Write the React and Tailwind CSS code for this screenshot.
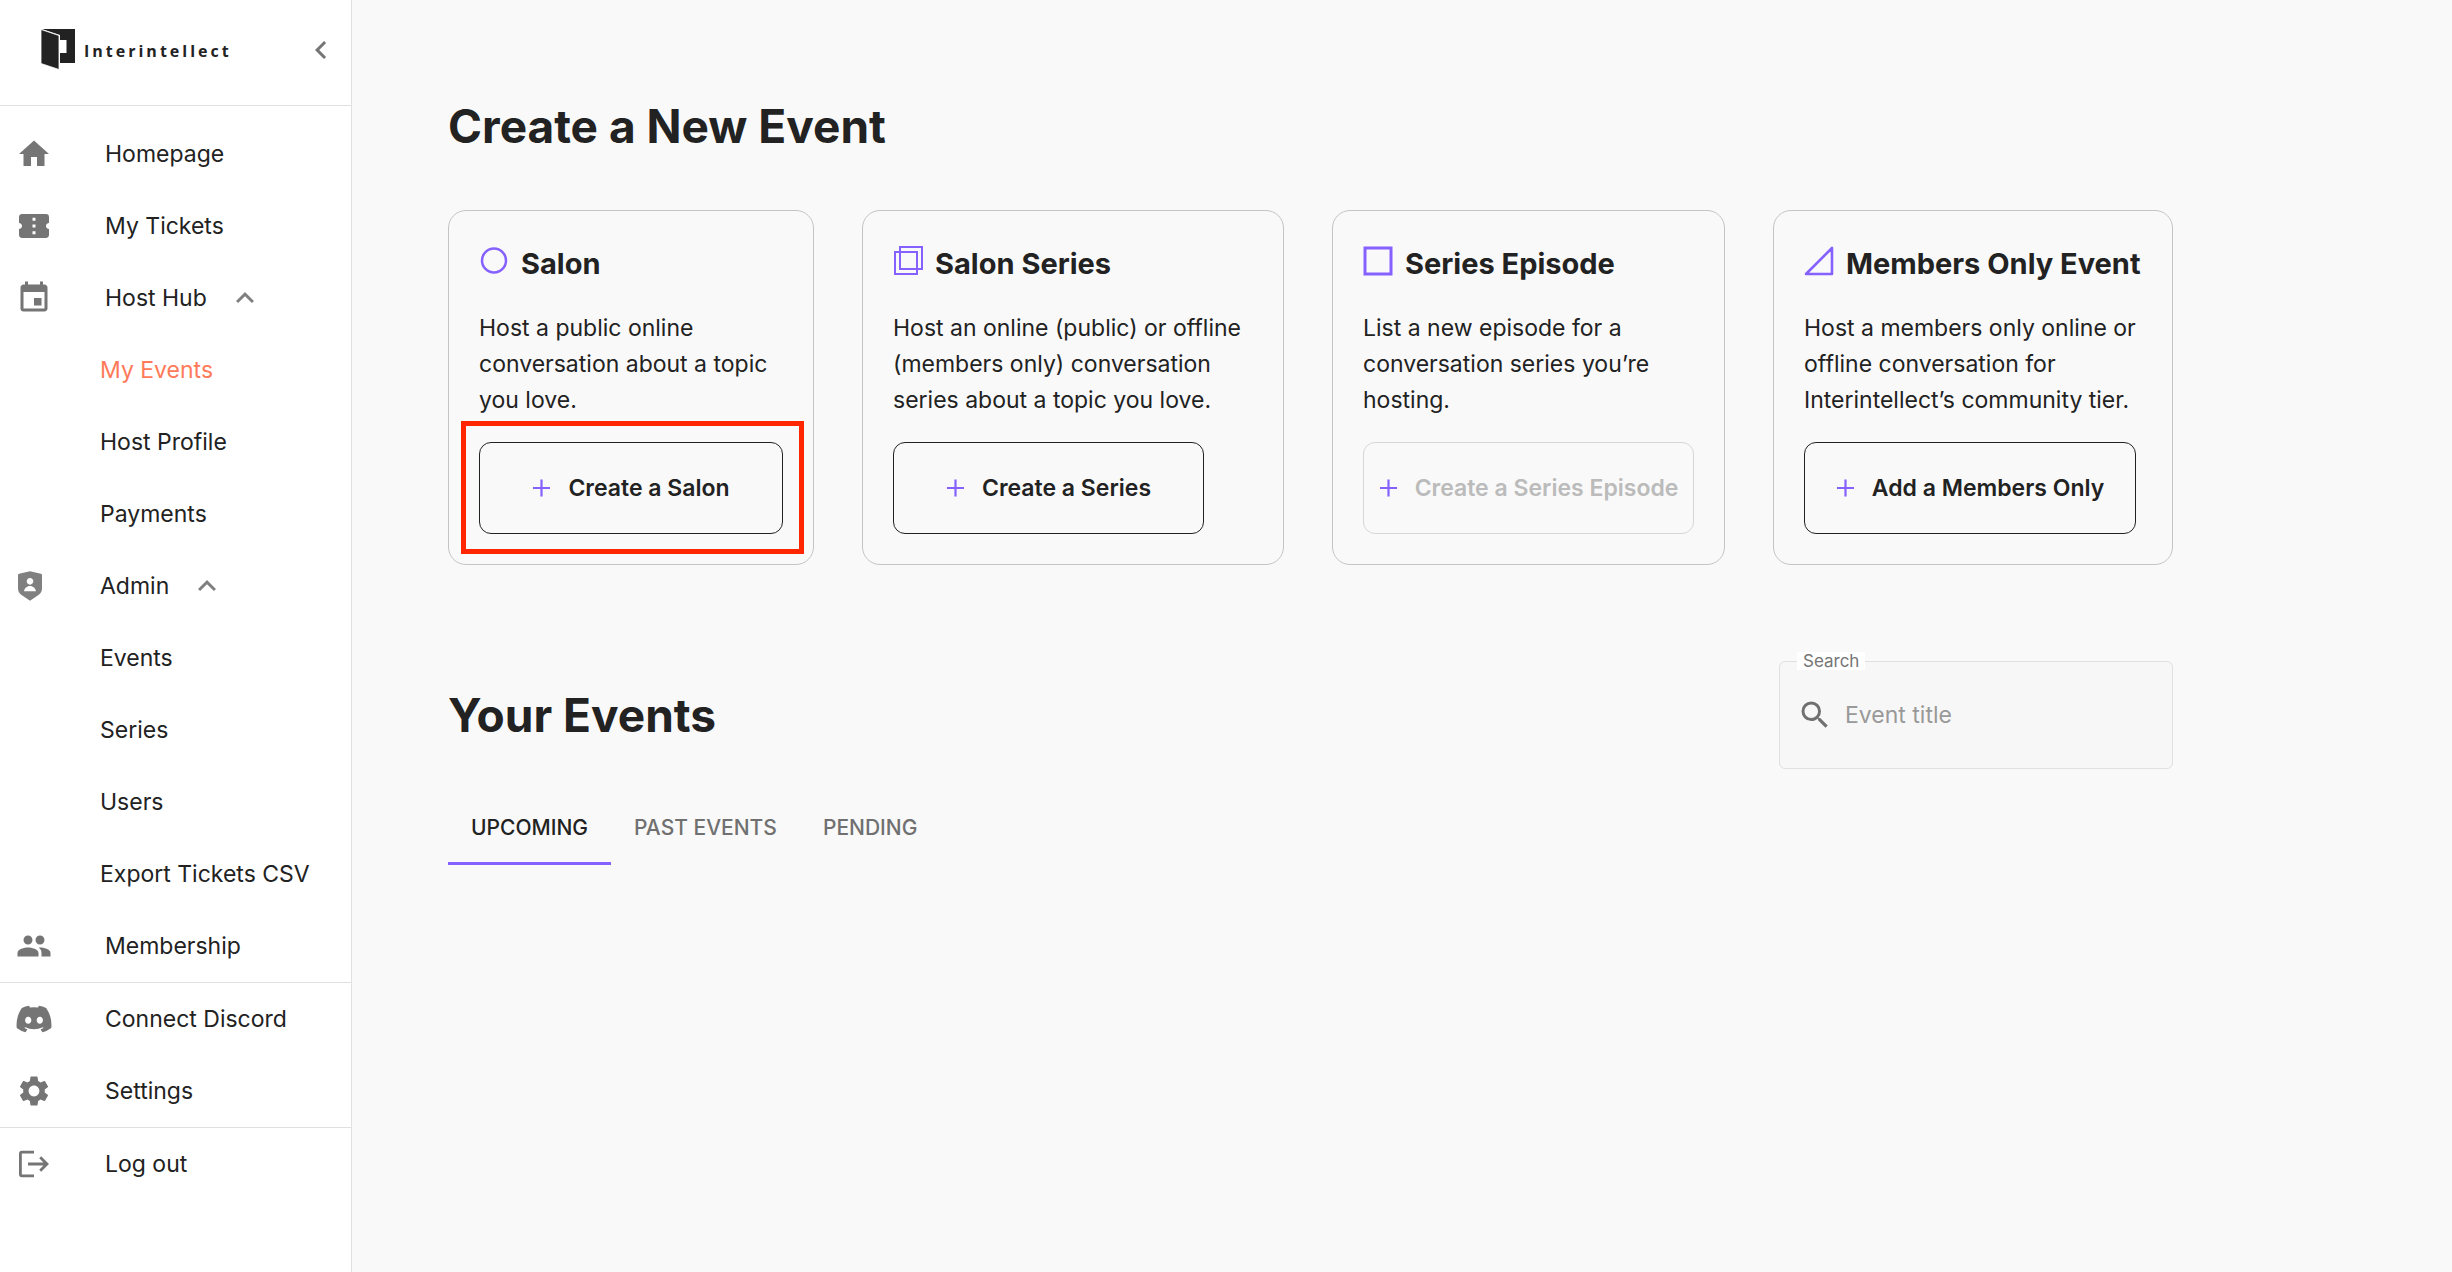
import React, { useState } from 'react';
import clsx from 'clsx';
import {
    MdConfirmationNumber,
    MdEvent,
    MdHome,
    MdKeyboardArrowLeft,
    MdKeyboardArrowUp,
    MdPeople,
    MdSearch,
    MdSettings
} from 'react-icons/md';
import { FaDiscord } from 'react-icons/fa';
import { RiShieldUserFill } from 'react-icons/ri';

const HOST_LINKS = ['My Events', 'Host Profile', 'Payments'];
const ADMIN_LINKS = ['Events', 'Series', 'Users', 'Export Tickets CSV'];
const TABS = ['Upcoming', 'Past Events', 'Pending'];

const LogoMark = () => (
    <svg className="h-[42px] w-9" viewBox="0 0 36 42" fill="none" aria-hidden="true">
        <path d="M2 1h33v34H20V25h6.5V12H20V7L2 1z" fill="#222" />
        <path d="M1 1.5l18 6v34L1 35.5v-34z" fill="#222" stroke="#fff" strokeWidth="0.8" />
    </svg>
);

const LogoutIcon = () => (
    <svg className="size-9" viewBox="0 0 36 36" fill="none" stroke="currentColor" strokeWidth="2.8" aria-hidden="true">
        <path d="M18 6.2H5.9a1.5 1.5 0 0 0-1.5 1.5v20.6a1.5 1.5 0 0 0 1.5 1.5H18" />
        <path d="M12 18h19M24.2 11.2l6.8 6.8-6.8 6.8" />
    </svg>
);

const PlusIcon = () => (
    <svg className="size-6 shrink-0" viewBox="0 0 24 24" stroke="#8561ff" strokeWidth="2.2" aria-hidden="true">
        <path d="M5 12h17M13.5 3.5v17" />
    </svg>
);

// Outline shapes used to tell the event types apart
const SHAPES = {
    circle: <circle cx="15" cy="14.5" r="12" strokeWidth="2.5" />,
    squares: (
        <>
            <path d="M2 6h22v22H2z" strokeWidth="2" />
            <path d="M7 1h22v22H7z" strokeWidth="2" />
        </>
    ),
    square: <path d="M2 2h26v26H2z" strokeWidth="3" />,
    triangle: <path d="M2 28L28 2v26H2z" strokeWidth="2.6" strokeLinejoin="round" />
};

const EVENT_TYPES = [
    {
        id: 'salon',
        title: 'Salon',
        shape: 'circle',
        description: 'Host a public online conversation about a topic you love.',
        action: 'Create a Salon',
        buttonClass: 'w-full',
        highlighted: true
    },
    {
        id: 'series',
        title: 'Salon Series',
        shape: 'squares',
        description: 'Host an online (public) or offline (members only) conversation series about a topic you love.',
        action: 'Create a Series',
        buttonClass: 'w-[311px]'
    },
    {
        id: 'episode',
        title: 'Series Episode',
        shape: 'square',
        description: 'List a new episode for a conversation series you’re hosting.',
        action: 'Create a Series Episode',
        buttonClass: 'w-full',
        disabled: true
    },
    {
        id: 'members',
        title: 'Members Only Event',
        shape: 'triangle',
        description: 'Host a members only online or offline conversation for Interintellect’s community tier.',
        action: 'Add a Members Only',
        buttonClass: 'w-[332px]'
    }
];

const NavItem = ({ icon, label }) => (
    <a href="#" className="flex h-18 items-center px-4">
        <span className="flex w-[89px] text-[#757575]">{icon}</span>
        {label}
    </a>
);

const NavGroup = ({ icon, label, links, active, narrow }) => {
    const [open, setOpen] = useState(true);

    return (
        <div>
            <button
                type="button"
                aria-expanded={open}
                onClick={() => setOpen(!open)}
                className={clsx('flex h-18 w-full items-center', narrow ? 'px-[14px]' : 'px-4')}
            >
                <span className={clsx('flex text-[#757575]', narrow ? 'w-[86px]' : 'w-[89px]')}>{icon}</span>
                {label}
                <MdKeyboardArrowUp className="ml-5 size-9 text-[#808080]" />
            </button>
            {open && links.map((link) => (
                <a
                    key={link}
                    href="#"
                    className={clsx('flex h-18 items-center pl-[100px]', link === active && 'text-[#ff7a59]')}
                >
                    {link}
                </a>
            ))}
        </div>
    );
};

const Sidebar = () => (
    <aside className="w-[352px] shrink-0 border-r border-[#e0e0e0] bg-white">
        <div className="flex h-[106px] items-start justify-between border-b border-[#e0e0e0] pt-7 pr-3 pl-10">
            <a href="#" className="flex items-center gap-2">
                <LogoMark />
                <span className="pt-1 font-['Open_Sans',sans-serif] text-base leading-6 font-bold tracking-[3px]">
                    Interintellect
                </span>
            </a>
            <button type="button" aria-label="Collapse menu" className="mt-1 text-[#757575]">
                <MdKeyboardArrowLeft className="size-9" />
            </button>
        </div>
        <nav className="pt-3 text-[23px] leading-9">
            <NavItem icon={<MdHome className="size-9" />} label="Homepage" />
            <NavItem icon={<MdConfirmationNumber className="size-9" />} label="My Tickets" />
            <NavGroup
                icon={<MdEvent className="size-9" />}
                label="Host Hub"
                links={HOST_LINKS}
                active="My Events"
            />
            <NavGroup
                icon={<RiShieldUserFill className="size-8 text-[#808080]" />}
                label="Admin"
                links={ADMIN_LINKS}
                narrow
            />
            <NavItem icon={<MdPeople className="size-9" />} label="Membership" />
            <div className="border-y border-[#e0e0e0]">
                <NavItem icon={<FaDiscord className="-ml-px size-[38px]" />} label="Connect Discord" />
                <NavItem icon={<MdSettings className="size-9" />} label="Settings" />
            </div>
            <NavItem icon={<LogoutIcon />} label="Log out" />
        </nav>
    </aside>
);

const EventTypeCard = ({ type }) => (
    <article className="flex flex-col gap-6 rounded-[18px] border border-[#c4c4c4] p-[30px]">
        <h2 className="flex items-center gap-3 text-[29px] leading-[45px] font-bold whitespace-nowrap">
            <svg className="h-9 w-[30px] shrink-0" viewBox="0 0 30 36" fill="none" stroke="#8561ff" aria-hidden="true">
                {SHAPES[type.shape]}
            </svg>
            {type.title}
        </h2>
        <p className="text-[23px] leading-9">{type.description}</p>
        <div className="relative mt-auto">
            <button
                type="button"
                disabled={type.disabled}
                className={clsx(
                    'flex h-[92px] max-w-full items-center justify-center gap-4 rounded-xl border pr-1 text-[23px] font-semibold whitespace-nowrap',
                    type.disabled ? 'border-[#d6d6d6] text-[#bbb]' : 'border-[#222]',
                    type.buttonClass
                )}
            >
                <PlusIcon />
                {type.action}
            </button>
            {type.highlighted && (
                <div className="pointer-events-none absolute -top-[21px] -right-[21px] -bottom-5 -left-[18px] border-5 border-[#ff2600]" />
            )}
        </div>
    </article>
);

const App = () => {
    const [tab, setTab] = useState('Upcoming');
    const [keyword, setKeyword] = useState('');

    return (
        <div className="flex min-h-screen bg-[#f9f9f9] font-['Inter',sans-serif] text-[#222]">
            <Sidebar />

            <main className="min-w-0 flex-1 px-24 py-24">
                <div className="max-w-[1725px]">
                    <h1 className="mb-[54px] text-[46px] leading-[60px] font-bold">Create a New Event</h1>

                    {/* Event types */}
                    <div className="grid grid-cols-[366fr_422fr_393fr_400fr] gap-12">
                        {EVENT_TYPES.map((type) => (
                            <EventTypeCard key={type.id} type={type} />
                        ))}
                    </div>

                    {/* Your events */}
                    <div className="mt-24 flex items-center justify-between">
                        <h1 className="text-[46px] leading-[60px] font-bold">Your Events</h1>
                        <div className="relative flex h-[108px] w-[394px] items-center gap-3 rounded-md border border-[#e0e0e0] bg-[#f7f7f7] px-[17px]">
                            <label
                                htmlFor="event-search"
                                className="absolute -top-[10px] left-[17px] bg-white px-[6px] text-[17px] leading-[18px] text-[#757575]"
                            >
                                Search
                            </label>
                            <MdSearch className="size-9 shrink-0 text-[#707070]" />
                            <input
                                id="event-search"
                                type="text"
                                placeholder="Event title"
                                value={keyword}
                                onChange={(e) => setKeyword(e.target.value)}
                                className="w-full min-w-0 bg-transparent text-[23px] leading-9 outline-none placeholder:text-[#999]"
                            />
                        </div>
                    </div>

                    <div role="tablist" className="mt-6 flex">
                        {TABS.map((name) => (
                            <button
                                key={name}
                                type="button"
                                role="tab"
                                aria-selected={tab === name}
                                onClick={() => setTab(name)}
                                className={clsx(
                                    'h-18 border-b-3 px-[23px] text-[21px] font-medium uppercase',
                                    tab === name ? 'border-[#8561ff]' : 'border-transparent text-[#707070]'
                                )}
                            >
                                {name}
                            </button>
                        ))}
                    </div>
                </div>
            </main>
        </div>
    );
};

export default App;
